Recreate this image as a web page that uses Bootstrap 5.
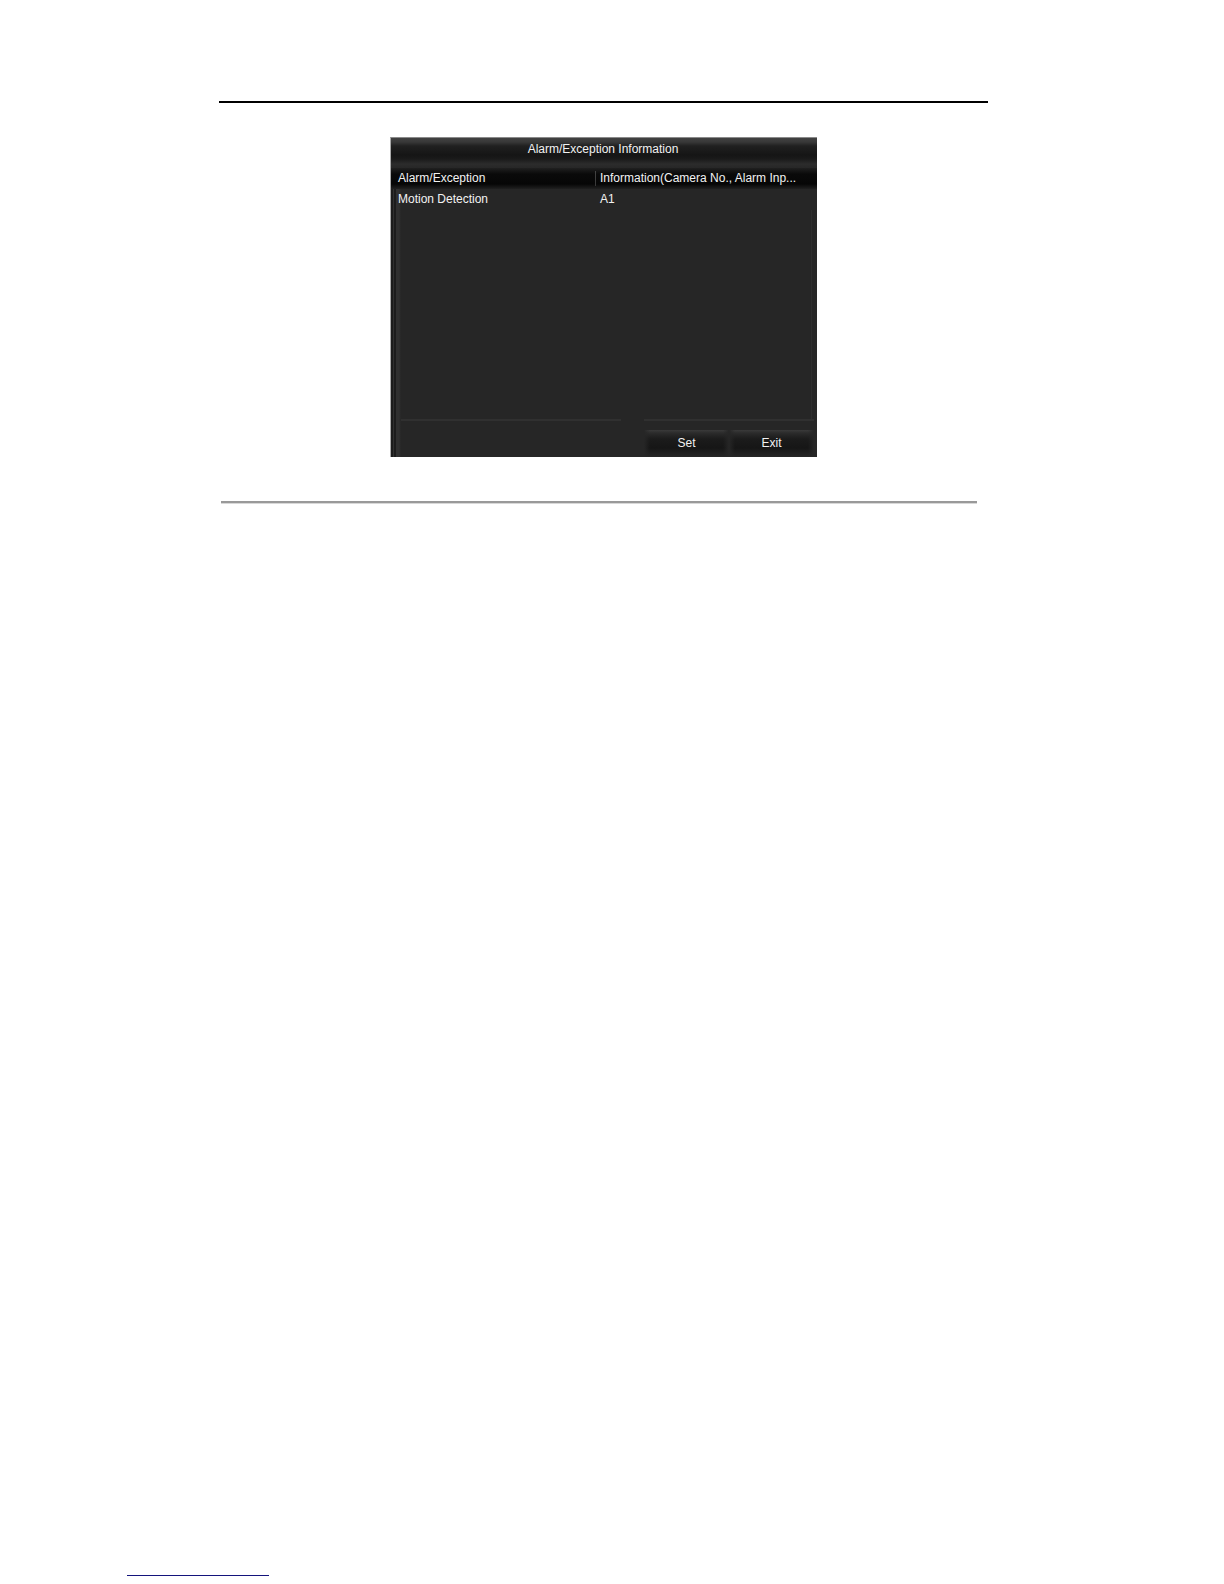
<!DOCTYPE html>
<html lang="en">
<head>
<meta charset="utf-8">
<meta name="viewport" content="width=device-width, initial-scale=1">
<title>Alarm/Exception Information</title>
<link href="https://cdn.jsdelivr.net/npm/bootstrap@5.3.0/dist/css/bootstrap.min.css" rel="stylesheet">
<style>
body { background: #fff; font-family: "Liberation Sans", Arial, sans-serif; }
.sheet { padding: 101px 236px 8px 127px; }
.sheet-body { margin-left: 92px; }
.rule-top { border-top: 2px solid #000; }
.rule-bottom { height: 3px; margin: 44px 11px 0 2px; background: linear-gradient(#999 2px, #d8d8d8 2px); }
.rule-foot { width: 142px; height: 1px; background: #14147c; }
.dialog {
  width: 427px; max-width: 100%; margin: 34px auto 0 171px;
  background: linear-gradient(90deg, #1c1c1c 2px, #303030 2px 3px, #1c1c1c 3px 5px, #303030 5px 8px, #262626 10px);
  border-top: 1px solid #8a8a8a; border-left: 1px solid #aaa;
  color: #f2f2f2; font-size: 12px; line-height: 21px;
}
.dialog-title {
  height: 30px; padding: 0 2px 0 0; font-size: 12px; line-height: 22px;
  background: linear-gradient(#424242, #383838 4px, #202020 8px, #151515 17px, #1a1a1a 21px, #2c2c2c 26px, #272727);
}
.info-grid { table-layout: fixed; width: 100%; }
.info-grid th, .info-grid td { padding: 0 0 0 7px; font-weight: 400; height: 21px; white-space: nowrap; }
.info-grid thead th { background: linear-gradient(#202020, #0a0a0a 6px, #060606 16px, #202020); }
.info-grid .col-kind { width: 202px; }
.info-grid thead th + th { background: linear-gradient(#444, #383838) 2px 50% / 1px 15px no-repeat, linear-gradient(#202020, #0a0a0a 6px, #060606 16px, #202020); }
.list-space { height: 209px; margin-right: 5px; border-right: 1px solid #2e2e2e; }
.dialog-foot { height: 38px; padding: 0 3px 0 10px; }
.foot-line { height: 2px; width: 220px; background: #303030; }
.foot-actions { width: 170px; border-top: 2px solid #303030; }
.dlg-btn {
  height: 27px; padding: 0 0 2px; border: 0; border-radius: 0; color: #f2f2f2; font-size: 12px; line-height: 18px;
  background: linear-gradient(90deg, #262626, transparent 6px calc(100% - 6px), #262626), linear-gradient(#3a3a3a, #2b2b2b 3px, #1b1b1b 9px, #161616 18px, #262626);
}
.dlg-btn:hover { color: #fff; background: #333; }
</style>
</head>
<body>
<div class="sheet min-vh-100 d-flex flex-column">
  <main class="sheet-body">
    <div class="rule-top"></div>
    <section class="dialog" aria-labelledby="dialogTitle">
      <h1 class="dialog-title text-center mb-0 fw-normal" id="dialogTitle">Alarm/Exception Information</h1>
      <table class="info-grid">
        <thead>
          <tr><th class="col-kind" scope="col">Alarm/Exception</th><th scope="col">Information(Camera No., Alarm Inp...</th></tr>
        </thead>
        <tbody>
          <tr><td>Motion Detection</td><td>A1</td></tr>
        </tbody>
      </table>
      <div class="list-space"></div>
      <div class="dialog-foot d-flex justify-content-between">
        <div class="foot-line"></div>
        <div class="foot-actions d-flex align-items-end">
          <button type="button" class="btn dlg-btn flex-fill w-50">Set</button>
          <button type="button" class="btn dlg-btn flex-fill w-50">Exit</button>
        </div>
      </div>
    </section>
    <div class="rule-bottom"></div>
  </main>
  <footer class="mt-auto"><div class="rule-foot"></div></footer>
</div>
<script src="https://cdn.jsdelivr.net/npm/bootstrap@5.3.0/dist/js/bootstrap.bundle.min.js"></script>
</body>
</html>
